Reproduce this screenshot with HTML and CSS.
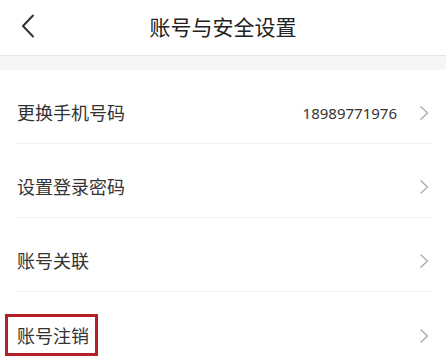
FILE: index.html
```html
<!DOCTYPE html>
<html lang="zh-CN">
<head>
<meta charset="utf-8">
<title>账号与安全设置</title>
<link rel="stylesheet" href="styles.css">
</head>
<body>
<div class="page">
  <header class="header">
    <span class="back">
      <svg width="14" height="24" viewBox="0 0 14 24"><polyline points="12,1.5 2,12 12,22.5" fill="none" stroke="#333" stroke-width="2" stroke-linecap="round" stroke-linejoin="round"/></svg>
    </span>
    <h1 class="title">账号与安全设置</h1>
  </header>
  <div class="gap"></div>
  <ul class="list">
    <li class="row">
      <span class="label">更换手机号码</span>
      <span class="value">18989771976</span>
      <svg class="arrow" width="10" height="16" viewBox="0 0 10 16"><polyline points="1.5,1.5 8.5,8 1.5,14.5" fill="none" stroke="#aaa" stroke-width="1.3"/></svg>
    </li>
    <li class="row">
      <span class="label">设置登录密码</span>
      <svg class="arrow" width="10" height="16" viewBox="0 0 10 16"><polyline points="1.5,1.5 8.5,8 1.5,14.5" fill="none" stroke="#aaa" stroke-width="1.3"/></svg>
    </li>
    <li class="row">
      <span class="label">账号关联</span>
      <svg class="arrow" width="10" height="16" viewBox="0 0 10 16"><polyline points="1.5,1.5 8.5,8 1.5,14.5" fill="none" stroke="#aaa" stroke-width="1.3"/></svg>
    </li>
    <li class="row last">
      <span class="label">账号注销</span>
      <svg class="arrow" width="10" height="16" viewBox="0 0 10 16"><polyline points="1.5,1.5 8.5,8 1.5,14.5" fill="none" stroke="#aaa" stroke-width="1.3"/></svg>
      <span class="highlight"></span>
    </li>
  </ul>
</div>
</body>
</html>
```

FILE: styles.css
```css
* { box-sizing: border-box; }
html, body {
  margin: 0;
  padding: 0;
  background: #fff;
}
body {
  font-family: "Noto Sans", "Noto Sans CJK SC", sans-serif;
  color: #333;
  width: 446px;
  height: 364px;
  overflow: hidden;
}
.header {
  height: 56px;
  display: flex;
  align-items: center;
  justify-content: center;
  position: relative;
  border-bottom: 1px solid #e6e6e6;
  background: #fff;
}
.back {
  position: absolute;
  left: 21px;
  top: 14px;
  width: 14px;
  height: 24px;
  display: block;
}
.back svg { display: block; }
.title {
  margin: 0;
  font-size: 21px;
  font-weight: 400;
  line-height: 28px;
  color: #222;
  padding-bottom: 2px;
}
.gap {
  height: 14px;
  background: #f5f5f5;
}
.list {
  list-style: none;
  margin: 0;
  padding: 0;
}
.row {
  position: relative;
  display: flex;
  align-items: center;
  height: 74px;
  padding: 31px 17px 18px 17px;
  margin: 0 14px 0 16px;
  padding-left: 1px;
  padding-right: 3px;
  border-bottom: 1px solid #f0f0f0;
}
.row.last { border-bottom: none; }
.label {
  flex: 1;
  font-size: 18px;
  line-height: 24px;
  color: #333;
}
.value {
  font-size: 15px;
  line-height: 24px;
  color: #333;
  margin-right: 22px;
}
.arrow {
  display: block;
  flex: none;
}
.highlight {
  position: absolute;
  left: -11px;
  top: 22px;
  width: 93px;
  height: 42px;
  border: 3px solid #b3202a;
}
```
